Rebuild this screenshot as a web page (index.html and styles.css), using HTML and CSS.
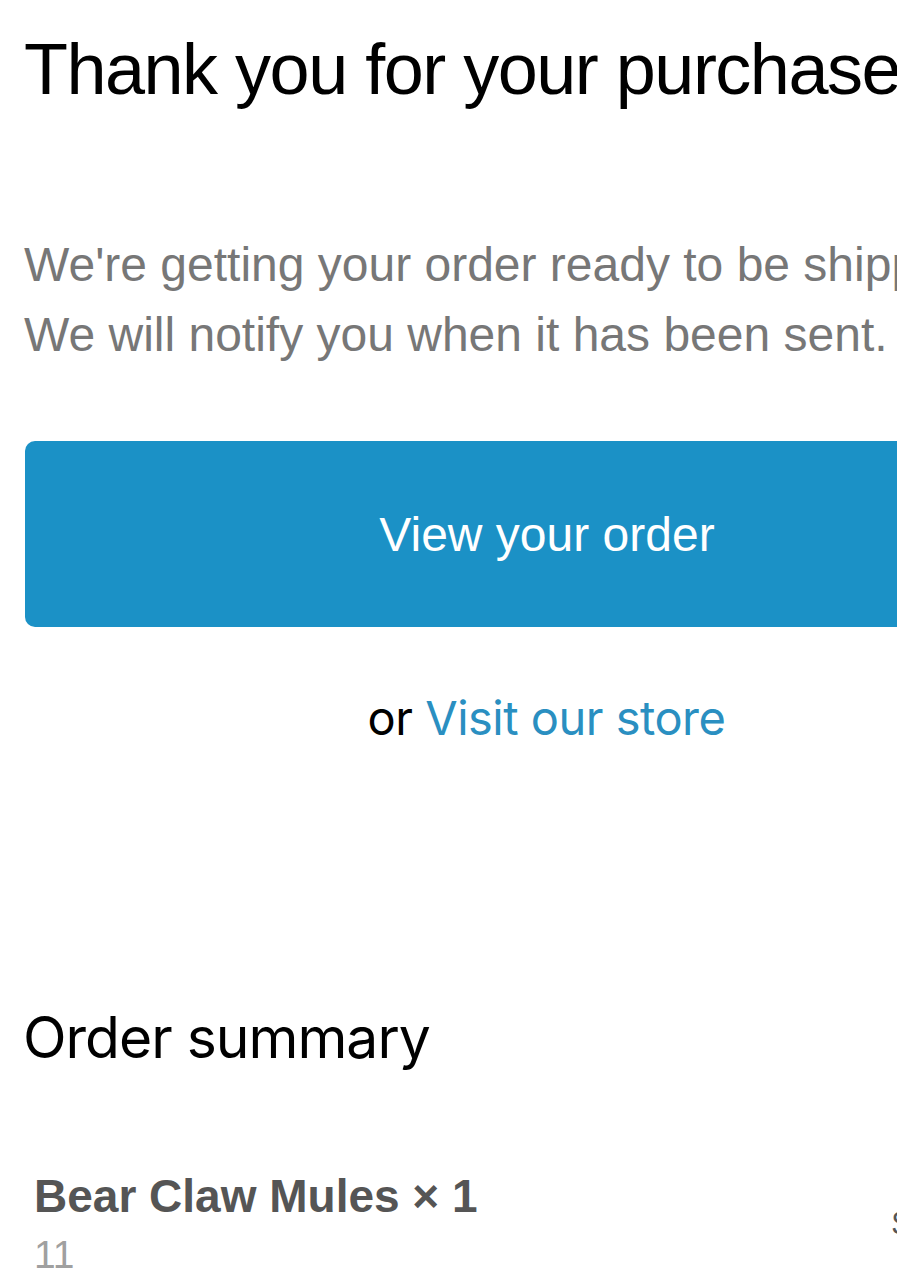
FILE: index.html
```html
<!DOCTYPE html>
<html lang="en">
<head>
<meta charset="utf-8">
<title>Thank you for your purchase</title>
<link rel="stylesheet" href="styles.css">
</head>
<body>
<div class="page">
  <h1 class="title">Thank you for your purchase!</h1>
  <p class="intro">We're getting your order ready to be shipped.<br>We will notify you when it has been sent.</p>
  <a class="btn" href="#">View your order</a>
  <p class="alt">or <a class="link" href="#">Visit our store</a></p>
  <h2 class="summary">Order summary</h2>
  <div class="item">
    <div class="item-info">
      <div class="item-name">Bear Claw Mules × 1</div>
      <div class="item-variant">11</div>
    </div>
    <div class="item-price">$79.00</div>
  </div>
</div>
</body>
</html>
```

FILE: styles.css
```css
html, body {
  margin: 0;
  padding: 0;
  background: #ffffff;
}
body {
  overflow: hidden;
  width: 897px;
  height: 1286px;
}
.page {
  width: 1045px;
  padding: 0 0 0 24px;
  box-sizing: content-box;
}
.title {
  margin: 26px 0 0 0;
  font-family: "Liberation Sans", Arial, sans-serif;
  font-weight: 400;
  font-size: 72px;
  line-height: 86px;
  letter-spacing: -1.5px;
  color: #000;
  white-space: nowrap;
}
.intro {
  margin: 118px 0 0 0;
  font-family: "Liberation Sans", Arial, sans-serif;
  font-size: 48px;
  line-height: 70px;
  color: #777777;
  white-space: nowrap;
}
.btn {
  display: flex;
  align-items: center;
  justify-content: center;
  margin: 71px 0 0 1px;
  height: 186px;
  border-radius: 10px;
  background: #1b91c6;
  color: #ffffff;
  text-decoration: none;
  font-family: "Liberation Sans", Arial, sans-serif;
  font-size: 48px;
}
.alt {
  margin: 56px 0 0 0;
  text-align: center;
  font-family: Inter, "Liberation Sans", sans-serif;
  font-size: 47px;
  line-height: 70px;
  letter-spacing: -0.5px;
  color: #000;
}
.link {
  color: #2a8fc1;
  text-decoration: none;
}
.summary {
  margin: 249px 0 0 -1px;
  font-family: Inter, "Liberation Sans", sans-serif;
  font-weight: 400;
  font-size: 57px;
  line-height: 72px;
  letter-spacing: -1px;
  color: #000;
}
.item {
  display: flex;
  justify-content: space-between;
  align-items: center;
  margin: 94px 0 0 10px;
  padding-right: 79px;
}
.item-name {
  font-family: "Liberation Sans", Arial, sans-serif;
  font-weight: 700;
  font-size: 46px;
  line-height: 56px;
  color: #555555;
}
.item-variant {
  margin-top: 8px;
  font-family: "Liberation Sans", Arial, sans-serif;
  font-size: 39px;
  line-height: 46px;
  color: #a0a0a0;
}
.item-price {
  font-family: "Liberation Sans", Arial, sans-serif;
  font-size: 32px;
  line-height: 40px;
  color: #555555;
}
```
